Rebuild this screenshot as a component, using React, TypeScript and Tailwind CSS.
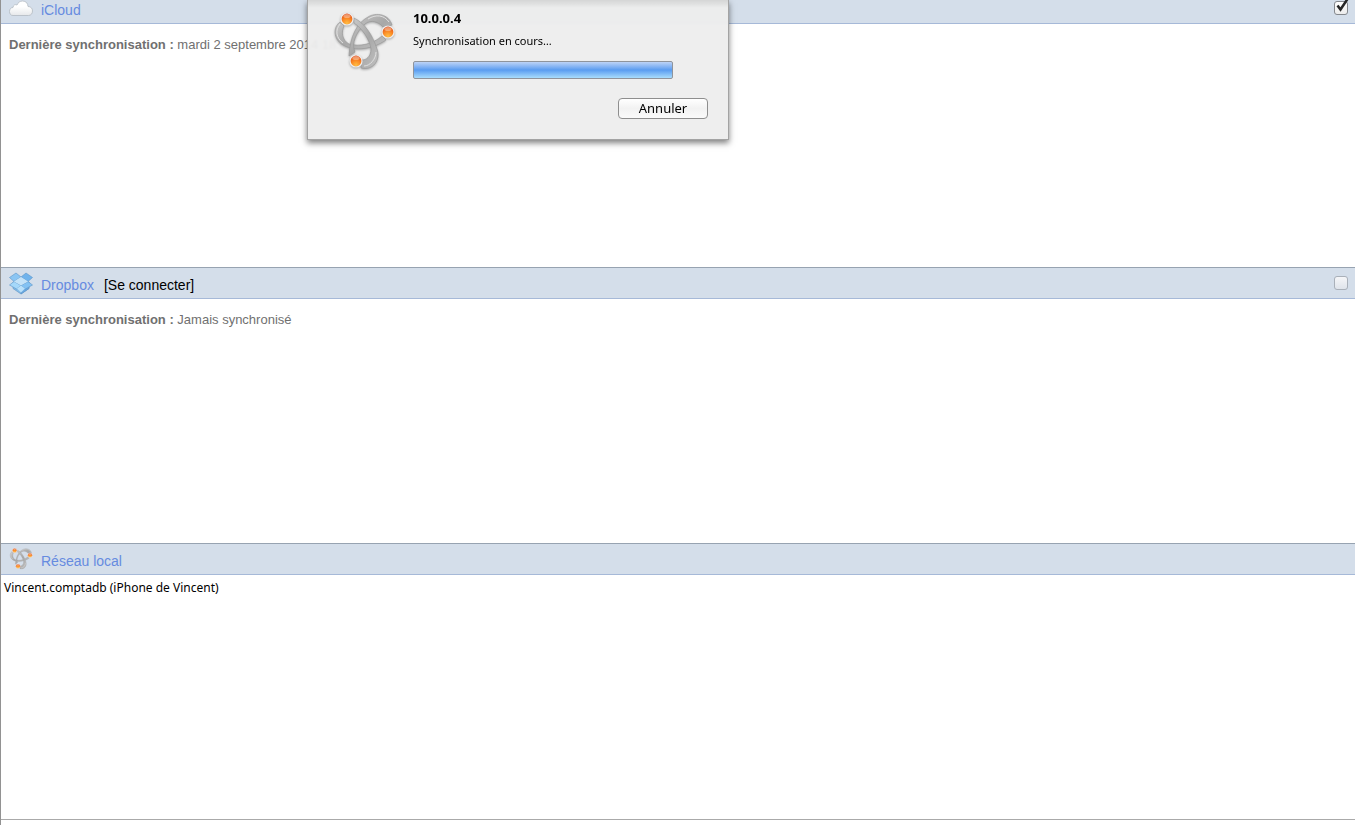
import React from "react";

const BonjourIcon = ({ className, id }: { className: string; id: string }) => {
  return (
    <svg viewBox="4 5 64 64" className={className} aria-hidden="true">
      <defs>
        <linearGradient id={`${id}-band`} x1="0" y1="0" x2="1" y2="1">
          <stop offset="0" stopColor="#c8c8c8" />
          <stop offset="0.5" stopColor="#a8a8a8" />
          <stop offset="1" stopColor="#c0c0c0" />
        </linearGradient>
        <radialGradient id={`${id}-ball`} cx="0.5" cy="0.85" r="0.8">
          <stop offset="0" stopColor="#ffbd43" />
          <stop offset="0.5" stopColor="#fb8a25" />
          <stop offset="1" stopColor="#de4b18" />
        </radialGradient>
      </defs>
      <g fill={`url(#${id}-band)`} stroke="#969696" strokeWidth="0.6" strokeLinejoin="round">
        <path d="M12 17C5 22 5 34 15 40C27 47 45 44 58 35L54 31C45 39 32 42 21 39C14 35 13 27 16 21Z" />
        <path d="M64 20C61 9 48 7 40 12C29 18 22 31 21 51L27 47C23 39 28 27 37 19C43 14 51 17 55 22Z" />
        <path d="M33 63C45 66 53 55 49 44C45 31 37 18 26 13L26 18C34 23 42 35 43 44C43 52 38 55 34 55Z" />
      </g>
      <g fill="none" stroke="#e4e4e4" strokeWidth="0.9">
        <path d="M12 19C7 25 8 33 15 38" />
        <path d="M61 17C56 10 48 9 40 14" />
        <path d="M48 47C48 54 42 61 36 61" />
      </g>
      <g fill={`url(#${id}-ball)`} stroke="#eeeeee" strokeWidth="1.2">
        <circle cx="19" cy="14" r="6" />
        <circle cx="60" cy="27" r="6" />
        <circle cx="28" cy="56" r="6" />
      </g>
      <g fill="#ffffff" opacity="0.35">
        <ellipse cx="19" cy="11" rx="3.6" ry="2" />
        <ellipse cx="60" cy="24" rx="3.6" ry="2" />
        <ellipse cx="28" cy="53" rx="3.6" ry="2" />
      </g>
    </svg>
  );
};

const CloudIcon = () => {
  return (
    <svg viewBox="0 0 24 24" className="size-6" aria-hidden="true">
      <defs>
        <linearGradient id="cloud" x1="0" y1="0" x2="0" y2="1">
          <stop offset="0.4" stopColor="#ffffff" />
          <stop offset="1" stopColor="#e6e8ea" />
        </linearGradient>
      </defs>
      <path
        d="M4 19.500C1.500 19.500 0.500 17.500 0.500 15.500C0.500 13 2 11.500 4 11.500C4 9 6.500 8 8 9C9 6.500 11 5 13.500 5C17 5 19 7.500 19 10.500C22 10.500 23.500 12.500 23.500 15C23.500 17.500 22 19.500 19.500 19.500Z"
        fill="url(#cloud)"
        stroke="#b3bac1"
        strokeWidth="0.8"
      />
    </svg>
  );
};

const DropboxIcon = () => {
  return (
    <svg viewBox="0 0 24 24" className="size-6" aria-hidden="true">
      <g stroke="#5c93c6" strokeWidth="0.6" strokeLinejoin="round">
        <path d="M4 11L12 14L20 11V17.500L12 23L4 17.500Z" fill="#85bce8" />
        <path d="M12 14L20 11V17.500L12 23Z" fill="#6aa9e2" />
        <path d="M7 2L12 6L5 10.500L0.500 6.500Z" fill="#8ac5f3" />
        <path d="M17 2L12 6L19 10.500L23.500 6.500Z" fill="#70b3ec" />
        <path d="M5 10.500L12 14.500L7.500 18L0.500 14Z" fill="#a5d8fa" />
        <path d="M19 10.500L12 14.500L16.500 18L23.500 14Z" fill="#83c2f3" />
      </g>
      <path d="M12 6L19 10.500L12 14.500L5 10.500Z" fill="#c3e2f8" />
      <path d="M12 14.500L16 17.500L12 21.500L8 17.500Z" fill="#b9e0fa" />
    </svg>
  );
};

type CheckProps = { label: string; defaultChecked?: boolean };

const Check = ({ label, defaultChecked }: CheckProps) => {
  return (
    <label className="relative ml-auto block size-[14px]">
      <input
        type="checkbox"
        aria-label={label}
        defaultChecked={defaultChecked}
        className="peer block size-[14px] appearance-none rounded-[3px] border border-[#a9b0b9] bg-linear-to-b from-[#f5f6f8] to-[#dfe4eb] checked:border-[#85888d] checked:from-white checked:to-[#ececec]"
      />
      <svg
        viewBox="0 0 16 16"
        className="pointer-events-none absolute -top-1 left-0 hidden size-4 peer-checked:block"
        aria-hidden="true"
      >
        <path d="M3.500 8.500L6.500 12.500L13.500 2" fill="none" stroke="#262626" strokeWidth="2.500" />
      </svg>
    </label>
  );
};

type ServiceProps = {
  icon: React.ReactNode;
  name: string;
  action?: React.ReactNode;
  check?: React.ReactNode;
  className: string;
  children: React.ReactNode;
};

const Service = ({ icon, name, action, check, className, children }: ServiceProps) => {
  return (
    <section className={className}>
      <header className="flex h-8 items-center border-t border-b border-t-[#97a3b1] border-b-[#a6b9d8] bg-[#d4deea] pr-[7px] pl-2 font-['Liberation_Sans',sans-serif] text-sm">
        {icon}
        <h2 className="mt-1 ml-2 text-[#668be0]">{name}</h2>
        {action}
        {check}
      </header>
      {children}
    </section>
  );
};

const LastSync = ({ value }: { value: string }) => {
  return (
    <p className="px-2 pt-[11px] font-['Liberation_Sans',sans-serif] text-[13px] leading-5 text-[#707070]">
      <b>Dernière synchronisation :</b> {value}
    </p>
  );
};

const SyncDialog = () => {
  return (
    <div
      role="dialog"
      aria-labelledby="sync-host"
      className="absolute top-0 left-[306px] flex w-[422px] border border-t-0 border-[#a3a3a3] bg-[#ededed]/95 pt-[10px] pr-5 pb-5 pl-6 font-['Noto_Sans',sans-serif] text-black shadow-[0_3px_6px_rgba(0,0,0,0.5)] backdrop-blur-[1px]"
    >
      <div className="pointer-events-none absolute inset-x-0 top-0 h-2 bg-linear-to-b from-black/10 to-transparent" />
      <BonjourIcon id="dialog" className="size-16 drop-shadow-[0_1px_1px_rgba(0,0,0,0.3)]" />
      <div className="ml-[17px] flex flex-1 flex-col">
        <h1 id="sync-host" className="text-[13px] leading-4 font-bold">
          10.0.0.4
        </h1>
        <p className="mt-[7px] text-[11px] leading-4">Synchronisation en cours…</p>
        <div
          role="progressbar"
          aria-label="Synchronisation en cours"
          className="mt-3 h-[18px] w-[260px] rounded-[2px] border border-[#8f949c] bg-linear-to-b from-[#bdd3f6] via-[#5a9cf0] to-[#a9dcfb]"
        />
        <button
          type="button"
          className="mt-[19px] h-[21px] w-[90px] self-end rounded-[4px] border border-[#8e8e8e] bg-linear-to-b from-white via-[#f2f2f2] to-[#fafafa] text-[13px] leading-[19px]"
        >
          Annuler
        </button>
      </div>
    </div>
  );
};

const App = () => {
  return (
    <div className="relative h-screen overflow-hidden border-l border-[#929292] bg-white">
      <main className="-mt-2">
        <Service
          icon={<CloudIcon />}
          name="iCloud"
          check={<Check label="iCloud" defaultChecked />}
          className="min-h-[275px]"
        >
          <LastSync value="mardi 2 septembre 2014 18:04" />
        </Service>
        <Service
          icon={<DropboxIcon />}
          name="Dropbox"
          action={
            <a href="#" className="mt-1 ml-[10px] text-black">
              [Se connecter]
            </a>
          }
          check={<Check label="Dropbox" />}
          className="min-h-[276px]"
        >
          <LastSync value="Jamais synchronisé" />
        </Service>
        <Service
          icon={<BonjourIcon id="local" className="size-6" />}
          name="Réseau local"
          className="min-h-[277px] border-b border-[#aaaaaa]"
        >
          <ul className="px-[3px] pt-1 font-['Noto_Sans',sans-serif] text-xs leading-[18px] text-black">
            <li>Vincent.comptadb (iPhone de Vincent)</li>
          </ul>
        </Service>
      </main>
      <SyncDialog />
    </div>
  );
};

export default App;
